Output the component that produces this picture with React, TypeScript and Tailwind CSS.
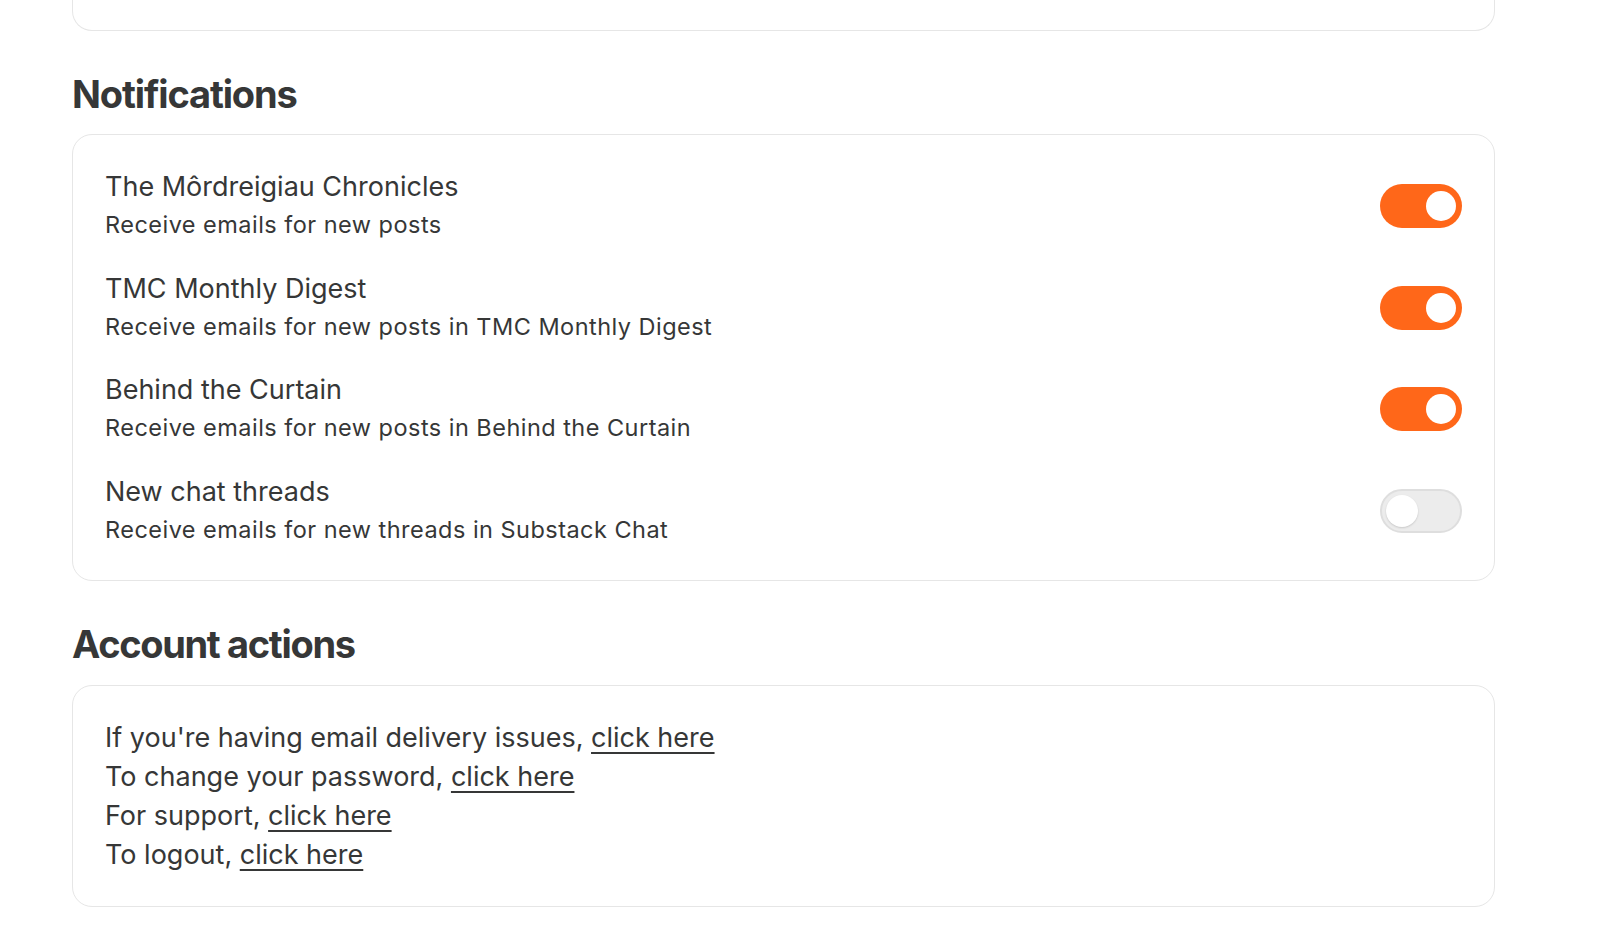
import React, { useState } from 'react';

const font = { fontFamily: 'Inter, "Noto Sans", sans-serif' };

type Item = { title: string; subtitle: string; on: boolean };

const Toggle: React.FC<{ on: boolean; onClick: () => void }> = ({ on, onClick }) => (
  <button
    onClick={onClick}
    className={
      on
        ? 'relative w-[82px] h-[44px] rounded-full bg-[#ff6719] shrink-0'
        : 'relative w-[82px] h-[44px] rounded-full bg-[#ececec] border-2 border-[#dedede] shrink-0'
    }
  >
    <span
      className={
        on
          ? 'absolute top-[7px] right-[6px] w-[30px] h-[30px] rounded-full bg-white'
          : 'absolute top-[4px] left-[4px] w-[32px] h-[32px] rounded-full bg-white shadow-[0_1px_2px_rgba(0,0,0,0.15)]'
      }
    />
  </button>
);

export default function App() {
  const [items, setItems] = useState<Item[]>([
    { title: 'The Môrdreigiau Chronicles', subtitle: 'Receive emails for new posts', on: true },
    { title: 'TMC Monthly Digest', subtitle: 'Receive emails for new posts in TMC Monthly Digest', on: true },
    { title: 'Behind the Curtain', subtitle: 'Receive emails for new posts in Behind the Curtain', on: true },
    { title: 'New chat threads', subtitle: 'Receive emails for new threads in Substack Chat', on: false },
  ]);

  const actions = [
    'If you\'re having email delivery issues,',
    'To change your password,',
    'For support,',
    'To logout,',
  ];

  return (
    <div className="min-h-screen bg-white text-[#363737] pl-[72px] pr-[108px]" style={font}>
      <div className="h-[31px] border border-t-0 border-[#e6e6e6] rounded-b-[20px]" />

      <h2 className="mt-[39px] mb-[16px] text-[38px] leading-[48px] font-bold tracking-[-0.03em]">Notifications</h2>
      <div className="border border-[#e6e6e6] rounded-[20px] px-[32px] pt-[34px] pb-[32px] flex flex-col gap-[27.5px]">
        {items.map((item, i) => (
          <div key={item.title} className="flex items-center justify-between">
            <div>
              <div className="text-[27px] leading-[36px]">{item.title}</div>
              <div className="mt-[2px] text-[23.5px] leading-[36px] tracking-[0.02em]">{item.subtitle}</div>
            </div>
            <Toggle
              on={item.on}
              onClick={() => setItems(items.map((it, j) => (j === i ? { ...it, on: !it.on } : it)))}
            />
          </div>
        ))}
      </div>

      <h2 className="mt-[39px] mb-[17px] text-[38px] leading-[48px] font-bold tracking-[-0.035em]">Account actions</h2>
      <div className="border border-[#e6e6e6] rounded-[20px] px-[32px] py-[32px]">
        {actions.map((a) => (
          <div key={a} className="text-[27px] leading-[39px]">
            {a}{' '}
            <a href="#" className="underline underline-offset-[5px] decoration-[2px]">click here</a>
          </div>
        ))}
      </div>
    </div>
  );
}
